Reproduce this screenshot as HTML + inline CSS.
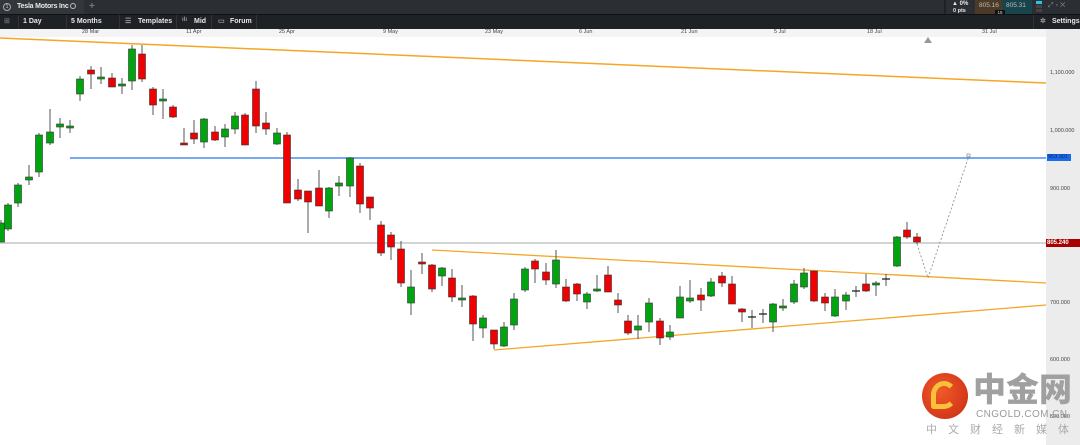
<!DOCTYPE html>
<html><head><meta charset="utf-8"><style>
*{margin:0;padding:0;box-sizing:border-box}
body{width:1080px;height:445px;overflow:hidden;background:#fff;font-family:"Liberation Sans",sans-serif;position:relative}
.t1{position:absolute;left:0;top:0;width:1080px;height:14px;background:#2b2e33}
.t2{position:absolute;left:0;top:14px;width:1080px;height:15px;background:#1e2125;border-top:1px solid #111}
.w{color:#e8e8e8;font-size:7px;font-weight:bold;position:absolute;white-space:nowrap}
.ax{position:absolute;left:1046px;top:29px;width:34px;height:416px;background:#ececec}
.dl{position:absolute;top:29px;font-size:5.5px;color:#444}
.pl{position:absolute;left:1050px;font-size:5.5px;color:#444}
</style></head><body>
<div class="t1"></div>
<div style="position:absolute;left:0;top:0;width:84px;height:14px;background:#33373c"></div>
<div style="position:absolute;left:3px;top:3px;width:8px;height:8px;border:1px solid #aaa;border-radius:50%;font-size:5px;color:#ccc;text-align:center;line-height:6px">1</div>
<div class="w" style="left:17px;top:3px;letter-spacing:-0.2px">Tesla Motors Inc</div>
<div style="position:absolute;left:70px;top:3px;width:6px;height:6px;border:1px solid #bbb;border-radius:50%"></div>
<div class="w" style="left:89px;top:1px;color:#777;font-size:10px">+</div>
<div style="position:absolute;left:944px;top:0;width:2px;height:14px;background:#1e2125"></div>
<div class="w" style="left:952px;top:1px;font-size:6px">▲ 0%</div>
<div class="w" style="left:953px;top:8px;font-size:5.5px">0 pts</div>
<div style="position:absolute;left:975px;top:0;width:27px;height:14px;background:#4a3a26"></div>
<div style="position:absolute;left:1002px;top:0;width:30px;height:14px;background:#18454b"></div>
<div class="w" style="left:979px;top:2px;font-weight:normal;color:#bbb;font-size:6.5px">805.16</div>
<div class="w" style="left:1006px;top:2px;font-weight:normal;color:#bbb;font-size:6.5px">805.31</div>
<div style="position:absolute;left:995px;top:10px;width:10px;height:5px;background:#111;color:#ddd;font-size:4.5px;text-align:center;line-height:5px">15</div>
<div style="position:absolute;left:1036px;top:1px;width:6px;height:3px;background:#29c5e6"></div>
<div style="position:absolute;left:1036px;top:5px;width:6px;height:3px;background:#444"></div>
<div style="position:absolute;left:1036px;top:9px;width:6px;height:3px;background:#444"></div>
<div class="w" style="left:1048px;top:2px;color:#888;font-weight:normal">⤢ ▫ ✕</div>
<div class="t2"></div>
<div style="position:absolute;left:18px;top:15px;width:1px;height:14px;background:#333"></div>
<div style="position:absolute;left:66px;top:15px;width:1px;height:14px;background:#333"></div>
<div style="position:absolute;left:119px;top:15px;width:1px;height:14px;background:#333"></div>
<div style="position:absolute;left:176px;top:15px;width:1px;height:14px;background:#333"></div>
<div style="position:absolute;left:211px;top:15px;width:1px;height:14px;background:#333"></div>
<div style="position:absolute;left:256px;top:15px;width:1px;height:14px;background:#333"></div>
<div style="position:absolute;left:1033px;top:15px;width:1px;height:14px;background:#333"></div>
<div class="w" style="left:4px;top:17px;color:#888;font-weight:normal">⊞</div>
<div class="w" style="left:23px;top:18px">1 Day</div>
<div class="w" style="left:71px;top:18px">5 Months</div>
<div class="w" style="left:125px;top:17px;color:#999">☰</div>
<div class="w" style="left:138px;top:18px">Templates</div>
<div class="w" style="left:182px;top:17px;color:#999;font-size:6px">ılı</div>
<div class="w" style="left:194px;top:18px">Mid</div>
<div class="w" style="left:218px;top:17px;color:#999">▭</div>
<div class="w" style="left:230px;top:18px">Forum</div>
<div class="w" style="left:1040px;top:17px;color:#999">✲</div>
<div class="w" style="left:1052px;top:18px">Settings</div>
<div style="position:absolute;left:0;top:29px;width:1080px;height:8px;background:#f4f4f4"></div>
<div class="dl" style="left:82px">28 Mar</div><div class="dl" style="left:186px">11 Apr</div><div class="dl" style="left:279px">25 Apr</div><div class="dl" style="left:383px">9 May</div><div class="dl" style="left:485px">23 May</div><div class="dl" style="left:579px">6 Jun</div><div class="dl" style="left:681px">21 Jun</div><div class="dl" style="left:774px">5 Jul</div><div class="dl" style="left:867px">18 Jul</div><div class="dl" style="left:982px">31 Jul</div>
<div class="ax"></div>
<div class="pl" style="top:70px">1,100.000</div>
<div class="pl" style="top:128px">1,000.000</div>
<div class="pl" style="top:186px">900.000</div>
<div class="pl" style="top:300px">700.000</div>
<div class="pl" style="top:357px">600.000</div>
<div class="pl" style="top:414px">500.000</div>
<div style="position:absolute;left:1047px;top:154px;width:24px;height:7px;background:#1a6be8;color:#0a2a6a;font-size:5.5px;padding-left:1px">953.301</div>
<div style="position:absolute;left:1046px;top:239px;width:34px;height:8px;background:#a80000;color:#fff;font-size:6px;font-weight:bold;padding-left:1px;line-height:8px">805.240</div>
<svg id="c" width="1046" height="445" style="position:absolute;left:0;top:0">
<polygon points="924,43 928,37 932,43" fill="#999"/>
<line x1="0" y1="38" x2="1046" y2="83" stroke="#f5a623" stroke-width="1.5"/>
<line x1="70" y1="158" x2="1046" y2="158" stroke="#4a8cf0" stroke-width="1.5"/>
<line x1="0" y1="243" x2="1046" y2="243" stroke="#aaa" stroke-width="1"/>
<line x1="432" y1="250" x2="1046" y2="283" stroke="#f5a623" stroke-width="1.3"/>
<line x1="494" y1="350" x2="1046" y2="305" stroke="#f5a623" stroke-width="1.3"/>
<polyline points="917,244 928,278 969,156" fill="none" stroke="#888" stroke-dasharray="2,2" stroke-width="0.8"/>
<rect x="967" y="154" width="3" height="3" fill="none" stroke="#888" stroke-width="0.7"/>
<g id="g"></g>
</svg>
<div style="position:absolute;left:922px;top:373px;width:46px;height:46px;border-radius:50%;background:radial-gradient(circle at 40% 40%,#f05a28,#c82a14)"></div>
<div style="position:absolute;left:931px;top:381px;width:26px;height:28px;border:5px solid #f9c03a;border-radius:50% 50% 50% 10%;border-right-color:transparent"></div>
<div style="position:absolute;left:973px;top:368px;font-family:'Noto Sans CJK SC',sans-serif;font-size:33px;font-weight:900;color:#a0a0a0;line-height:38px">中金网</div>
<div style="position:absolute;left:976px;top:409px;font-size:10px;color:#9a9a9a;letter-spacing:0.4px">CNGOLD.COM.CN</div>
<div style="position:absolute;left:926px;top:421px;font-family:'Noto Sans CJK SC',sans-serif;font-size:11px;color:#aaa;letter-spacing:11px">中文财经新媒体</div>
<script>
var d=[[1,"G",223,242,220,242],[8,"G",205,229,203,231],[18,"G",185,203,183,207],[29,"G",177,180,165,185],[39,"G",135,172,133,177],[50,"G",132,143,109,145],[60,"G",124,127,118,138],[70,"G",126,127,120,133],[80,"G",79,94,76,101],[91,"R",70,74,66,89],[101,"G",77,79,67,84],[112,"R",78,87,73,87],[122,"G",84,85,78,94],[132,"G",49,81,45,90],[142,"R",54,79,45,82],[153,"R",89,105,87,115],[163,"G",99,101,89,119],[173,"R",107,117,105,118],[184,"R",143,145,128,145],[194,"R",133,139,120,144],[204,"G",119,142,118,148],[215,"R",132,140,126,141],[225,"G",129,137,124,147],[235,"G",116,129,112,134],[245,"R",115,145,113,145],[256,"R",89,126,81,133],[266,"R",123,129,112,135],[277,"G",133,144,128,145],[287,"R",135,203,132,203],[298,"R",190,199,179,201],[308,"R",191,202,191,233],[319,"R",188,206,170,206],[329,"G",188,211,187,218],[339,"G",183,186,176,196],[350,"G",158,186,157,197],[360,"R",166,204,163,213],[370,"R",197,208,197,220],[381,"R",225,253,221,256],[391,"R",235,247,232,260],[401,"R",249,283,241,287],[411,"G",287,303,270,315],[422,"R",262,264,253,274],[432,"R",265,289,264,292],[442,"G",268,276,267,286],[452,"R",278,297,269,302],[462,"G",298,299,285,307],[473,"R",296,324,295,341],[483,"G",318,328,315,338],[494,"R",330,344,330,349],[504,"G",327,346,322,347],[514,"G",299,325,293,330],[525,"G",269,290,267,292],[535,"R",261,269,259,283],[546,"R",272,280,263,285],[556,"G",260,284,250,288],[566,"R",287,301,279,302],[577,"R",284,294,283,301],[587,"G",294,302,292,309],[597,"G",289,291,275,292],[608,"R",275,292,266,292],[618,"R",300,305,293,313],[628,"R",321,333,315,335],[638,"G",326,330,315,339],[649,"G",303,322,298,332],[660,"R",321,338,318,345],[670,"G",332,337,325,340],[680,"G",297,318,286,318],[690,"G",298,301,280,303],[701,"R",295,300,288,311],[711,"G",282,296,278,297],[722,"R",276,283,272,287],[732,"R",284,304,276,304],[742,"R",309,312,308,322],[752,"X",317,317,310,328],[763,"X",314,314,309,323],[773,"G",304,322,303,332],[783,"G",306,307,299,311],[794,"G",284,302,280,304],[804,"G",273,287,268,289],[814,"R",271,301,271,302],[825,"R",297,303,293,311],[835,"G",297,316,289,317],[846,"G",295,301,292,310],[856,"X",291,291,286,297],[866,"R",284,291,274,292],[876,"G",283,284,281,296],[886,"X",279,279,274,286],[897,"G",237,266,236,267],[907,"R",230,237,222,239],[917,"R",237,242,233,244]];
var s="";d.forEach(function(c){var x=c[0];s+='<line x1="'+x+'" x2="'+x+'" y1="'+c[4]+'" y2="'+c[5]+'" stroke="#555" stroke-width="1"/>';
if(c[1]=="X"){s+='<line x1="'+(x-4)+'" x2="'+(x+4)+'" y1="'+c[2]+'" y2="'+c[2]+'" stroke="#111" stroke-width="1.2"/>';}
else{var h=Math.max(c[3]-c[2],2);s+='<rect x="'+(x-3.5)+'" y="'+c[2]+'" width="7" height="'+h+'" fill="'+(c[1]=="G"?"#00a40f":"#f00000")+'" stroke="#333" stroke-width="0.6"/>';}});
document.getElementById("g").innerHTML=s;
</script>
</body></html>
